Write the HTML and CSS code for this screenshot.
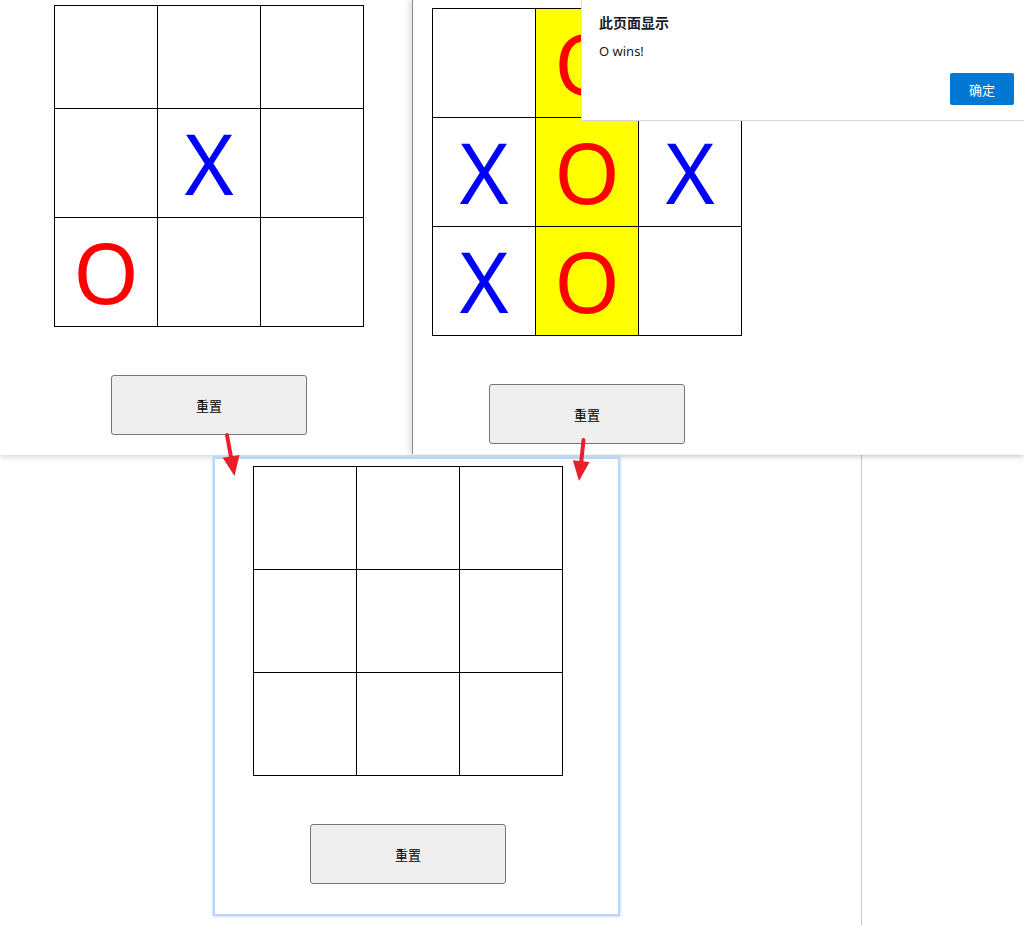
FILE: index.html
```html
<!DOCTYPE html>
<html lang="zh-CN">
<head>
<meta charset="utf-8">
<title>井字棋</title>
<link rel="stylesheet" href="styles.css">
</head>
<body>
<div class="canvas">
  <div class="top">
    <section class="win win-left">
      <div class="app app-left">
        <table class="board">
          <tr><td></td><td></td><td></td></tr>
          <tr><td></td><td class="x">X</td><td></td></tr>
          <tr><td class="o">O</td><td></td><td></td></tr>
        </table>
        <button class="reset">重置</button>
      </div>
    </section>
    <section class="win win-right">
      <div class="app app-right">
        <table class="board">
          <tr><td></td><td class="o win-cell">O</td><td class="x">X</td></tr>
          <tr><td class="x">X</td><td class="o win-cell">O</td><td class="x">X</td></tr>
          <tr><td class="x">X</td><td class="o win-cell">O</td><td></td></tr>
        </table>
        <button class="reset">重置</button>
      </div>
      <div class="dialog">
        <div class="dialog-title">此页面显示</div>
        <div class="dialog-msg">O wins!</div>
        <div class="dialog-actions"><button class="ok">确定</button></div>
      </div>
    </section>
  </div>
  <div class="bottom">
    <div></div>
    <section class="win-bottom">
      <div class="app app-bottom">
        <table class="board">
          <tr><td></td><td></td><td></td></tr>
          <tr><td></td><td></td><td></td></tr>
          <tr><td></td><td></td><td></td></tr>
        </table>
        <button class="reset">重置</button>
      </div>
    </section>
    <div></div>
    <div class="vline"></div>
  </div>
  <svg class="arrows" width="1024" height="925" viewBox="0 0 1024 925">
    <line x1="227" y1="435" x2="231.5" y2="460" class="shaft"/>
    <polygon points="234.5,476 239.5,454.9 222.7,457.7" class="head"/>
    <line x1="583.5" y1="440" x2="581" y2="464" class="shaft"/>
    <polygon points="579,481 589.6,462 572.8,460.2" class="head"/>
  </svg>
</div>
</body>
</html>
```

FILE: styles.css
```css
html, body {
  margin: 0;
  padding: 0;
  background: #ffffff;
}

.canvas {
  position: relative;
  width: 1024px;
  height: 925px;
  overflow: hidden;
  background: #ffffff;
  font-family: "Noto Sans", "Noto Sans CJK SC", sans-serif;
}

.top {
  display: flex;
  height: 455px;
  position: relative;
  z-index: 1;
  box-shadow: 0 2px 5px rgba(0, 0, 0, 0.16);
}

.win {
  background: #ffffff;
  box-sizing: border-box;
}

.win-left {
  width: 412px;
  height: 455px;
}

.win-right {
  position: relative;
  flex: 1;
  height: 454px;
  border-left: 1px solid #8a8a8a;
  box-shadow: -3px 0 6px rgba(0, 0, 0, 0.12);
}

.app {
  display: flex;
  flex-direction: column;
  align-items: center;
  width: 310px;
}

.app-left {
  padding: 5px 0 0 54px;
}

.app-right {
  padding: 8px 0 0 19px;
}

.app-bottom {
  padding: 7px 0 0 38px;
}

.board {
  border-collapse: collapse;
  border-spacing: 0;
}

.board td {
  width: 100px;
  height: 100px;
  padding: 1px;
  border: 1px solid #000000;
  text-align: center;
  vertical-align: middle;
  font-family: "Noto Sans", sans-serif;
  font-size: 84px;
  line-height: 106px;
}

.board td.x {
  color: #0000ff;
}

.board td.o {
  color: #ff0000;
}

.board td.win-cell {
  background: #ffff00;
}

.reset {
  margin-top: 48px;
  width: 196px;
  height: 60px;
  background: #efefef;
  border: 1px solid #767676;
  border-radius: 3px;
  font-family: "Noto Sans CJK SC", sans-serif;
  font-size: 13px;
  color: #000000;
  padding: 0;
}

.dialog {
  position: absolute;
  left: 168px;
  top: 0;
  right: 0;
  height: 121px;
  box-sizing: border-box;
  background: #ffffff;
  border-left: 1px solid #e3e3e3;
  border-bottom: 1px solid #d6d6d6;
  padding: 12px 10px 0 17px;
  display: flex;
  flex-direction: column;
  font-family: "Noto Sans", "Noto Sans CJK SC", sans-serif;
  color: #1a1a1a;
}

.dialog-title {
  font-family: "Noto Sans CJK SC", sans-serif;
  font-weight: bold;
  font-size: 14px;
  line-height: 20px;
}

.dialog-msg {
  margin-top: 10px;
  font-size: 13px;
  line-height: 18px;
  color: #202020;
}

.dialog-actions {
  display: flex;
  justify-content: flex-end;
  margin-top: 13px;
}

.ok {
  width: 64px;
  height: 32px;
  background: #0078d4;
  color: #ffffff;
  border: none;
  border-radius: 2px;
  font-family: "Noto Sans CJK SC", sans-serif;
  font-size: 13px;
  padding: 0;
}

.bottom {
  display: grid;
  grid-template-columns: 213px 407px 241px 1px;
  height: 470px;
}

.win-bottom {
  position: relative;
  z-index: 2;
  margin-top: 2px;
  height: 459px;
  box-sizing: border-box;
  background: #ffffff;
  border: 2px solid #b6d6fb;
  box-shadow: 0 0 3px rgba(120, 175, 245, 0.7);
}

.vline {
  background: #c8c8c8;
}

.arrows {
  position: absolute;
  left: 0;
  top: 0;
  z-index: 5;
  pointer-events: none;
}

.arrows .shaft {
  stroke: #e8202a;
  stroke-width: 4;
  stroke-linecap: round;
}

.arrows .head {
  fill: #e8202a;
}
```
